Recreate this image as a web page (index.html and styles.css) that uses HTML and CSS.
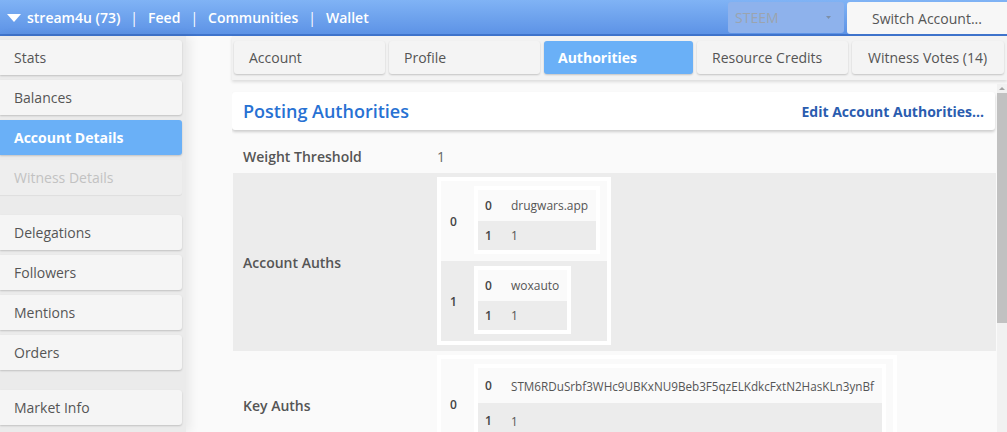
FILE: index.html
```html
<!DOCTYPE html>
<html lang="en">
<head>
  <meta charset="UTF-8">
  <title>stream4u - Account Details</title>
  <link rel="stylesheet" href="styles.css">
</head>
<body>
  <header class="topbar">
    <div class="topbar-left">
      <svg class="caret" width="14" height="8" viewBox="0 0 14 8"><path d="M0 0 L14 0 L7 8 Z" fill="#fff"/></svg>
      <a href="#">stream4u (73)</a>
      <span class="sep">|</span>
      <a href="#">Feed</a>
      <span class="sep">|</span>
      <a href="#">Communities</a>
      <span class="sep">|</span>
      <a href="#">Wallet</a>
    </div>
    <div class="topbar-right">
      <div class="chain-select">
        <span>STEEM</span>
        <svg width="5" height="3" viewBox="0 0 5 3"><path d="M0 0 L5 0 L2.5 3 Z" fill="#7d8fa8"/></svg>
      </div>
      <button class="switch-btn">Switch Account...</button>
    </div>
  </header>

  <div class="main">
    <nav class="sidebar">
      <div class="side-group">
        <a class="side-item" href="#">Stats</a>
        <a class="side-item" href="#">Balances</a>
        <a class="side-item active" href="#">Account Details</a>
        <a class="side-item disabled" href="#">Witness Details</a>
      </div>
      <div class="side-group">
        <a class="side-item" href="#">Delegations</a>
        <a class="side-item" href="#">Followers</a>
        <a class="side-item" href="#">Mentions</a>
        <a class="side-item" href="#">Orders</a>
      </div>
      <div class="side-group">
        <a class="side-item" href="#">Market Info</a>
      </div>
    </nav>

    <section class="content">
      <div class="tabs">
        <a class="tab" href="#">Account</a>
        <a class="tab" href="#">Profile</a>
        <a class="tab active" href="#">Authorities</a>
        <a class="tab" href="#">Resource Credits</a>
        <a class="tab" href="#">Witness Votes (14)</a>
      </div>

      <div class="pane-wrap">
        <div class="pane">
          <div class="panel-head">
            <h2>Posting Authorities</h2>
            <a href="#" class="edit-link">Edit Account Authorities...</a>
          </div>

          <table class="auth-table">
            <tr class="light">
              <th>Weight Threshold</th>
              <td class="plain">1</td>
            </tr>
            <tr class="dark">
              <th>Account Auths</th>
              <td>
                <table class="nest">
                  <tr class="light">
                    <th>0</th>
                    <td>
                      <table class="pair">
                        <tr class="light"><th>0</th><td>drugwars.app</td></tr>
                        <tr class="dark"><th>1</th><td>1</td></tr>
                      </table>
                    </td>
                  </tr>
                  <tr class="dark">
                    <th>1</th>
                    <td>
                      <table class="pair">
                        <tr class="light"><th>0</th><td>woxauto</td></tr>
                        <tr class="dark"><th>1</th><td>1</td></tr>
                      </table>
                    </td>
                  </tr>
                </table>
              </td>
            </tr>
            <tr class="light">
              <th>Key Auths</th>
              <td>
                <table class="nest">
                  <tr class="light">
                    <th>0</th>
                    <td>
                      <table class="pair wide">
                        <tr class="light"><th>0</th><td>STM6RDuSrbf3WHc9UBKxNU9Beb3F5qzELKdkcFxtN2HasKLn3ynBf</td></tr>
                        <tr class="dark"><th>1</th><td>1</td></tr>
                      </table>
                    </td>
                  </tr>
                </table>
              </td>
            </tr>
          </table>
        </div>
        <div class="scrollbar">
          <div class="scroll-up"></div>
          <div class="scroll-thumb"></div>
        </div>
      </div>
    </section>
  </div>
</body>
</html>
```

FILE: styles.css
```css
* {
  box-sizing: border-box;
}
body {
  margin: 0;
  background-color: #fafafa;
  color: #555;
  font-family: "Open Sans", "Liberation Sans", sans-serif;
  font-size: 14px;
  height: 432px;
  overflow: hidden;
  display: flex;
  flex-direction: column;
}
a {
  text-decoration: none;
}

/* top bar */
.topbar {
  height: 36px;
  flex: none;
  display: flex;
  justify-content: space-between;
  align-items: center;
  background: linear-gradient(#80b3f5, #5d93e6);
  border-bottom: 2px solid #3f74cc;
}
.topbar-left {
  display: flex;
  align-items: center;
  padding-left: 7px;
  color: #fff;
  font-weight: 600;
}
.topbar-left a {
  color: #fff;
}
.caret {
  margin-right: 6px;
  margin-top: 2px;
}
.sep {
  margin: 0 10px;
  font-weight: 400;
}
.topbar-right {
  display: flex;
  align-self: stretch;
  padding-top: 2px;
  gap: 3px;
}
.chain-select {
  width: 116px;
  height: 31px;
  display: flex;
  justify-content: space-between;
  align-items: center;
  padding: 0 13px 0 7px;
  background-color: #8eb2ec;
  border-radius: 3px;
  color: #9ba4af;
  font-size: 14px;
}
.switch-btn {
  width: 160px;
  height: 32px;
  border: none;
  border-radius: 3px 0 0 3px;
  background-color: #f7f7f7;
  color: #555;
  font-family: inherit;
  font-size: 14px;
  padding: 0;
}

/* layout */
.main {
  flex: 1;
  display: flex;
  min-height: 0;
}

/* sidebar */
.sidebar {
  width: 186px;
  flex: none;
  background-color: #ebebeb;
  box-shadow: 4px 0 10px rgba(0, 0, 0, 0.07);
  padding-top: 4px;
  display: flex;
  flex-direction: column;
  gap: 20px;
}
.side-group {
  display: flex;
  flex-direction: column;
  gap: 5px;
}
.side-item {
  width: 182px;
  height: 35px;
  display: flex;
  align-items: center;
  padding-left: 14px;
  background-color: #f5f5f5;
  color: #555;
  border-radius: 0 3px 3px 0;
  box-shadow: 0 1px 2px rgba(0, 0, 0, 0.18);
}
.side-item.active {
  background-color: #6ab0f7;
  color: #fff;
  font-weight: 700;
}
.side-item.disabled {
  background-color: #eeeeee;
  color: #c2c2c2;
  box-shadow: 0 1px 1px rgba(0, 0, 0, 0.06);
}

/* content */
.content {
  flex: 1;
  display: flex;
  flex-direction: column;
  padding-left: 46px;
  min-width: 0;
  min-height: 0;
}
.tabs {
  flex: none;
  display: flex;
  gap: 4px;
  padding: 5px 0 6px 2px;
  background-color: #f3f3f3;
  box-shadow: 0 2px 3px rgba(0, 0, 0, 0.12);
  margin-bottom: 4px;
}
.tab {
  width: 151px;
  height: 33px;
  display: flex;
  align-items: center;
  padding-left: 15px;
  background-color: #f4f4f4;
  color: #555;
  border-radius: 3px;
  box-shadow: 0 1px 2px rgba(0, 0, 0, 0.2);
}
.tab:nth-child(3) {
  width: 149px;
  padding-left: 14px;
}
.tab:nth-child(5) {
  width: 152px;
  padding-left: 16px;
}
.tab.active {
  background-color: #6ab0f7;
  color: #fff;
  font-weight: 700;
}

.pane-wrap {
  flex: 1;
  min-height: 0;
  display: flex;
}
.pane {
  flex: 1;
  min-width: 0;
  overflow: hidden;
  padding-top: 8px;
}
.scrollbar {
  width: 10px;
  flex: none;
  background-color: #f1f1f1;
  display: flex;
  flex-direction: column;
  align-items: center;
}
.scroll-up {
  width: 0;
  height: 0;
  margin: 3px 0 3px;
  border-left: 3px solid transparent;
  border-right: 3px solid transparent;
  border-bottom: 3px solid #a3a3a3;
}
.scroll-thumb {
  width: 10px;
  height: 230px;
  background-color: #c1c1c1;
}

.panel-head {
  height: 38px;
  margin-right: 2px;
  display: flex;
  justify-content: space-between;
  align-items: center;
  padding: 0 11px;
  background-color: #fff;
  border-radius: 3px;
  box-shadow: 0 2px 3px rgba(0, 0, 0, 0.18);
  margin-bottom: 10px;
}
.panel-head h2 {
  margin: 0;
  font-size: 18px;
  font-weight: 600;
  color: #2771d3;
}
.edit-link {
  color: #2a5caf;
  font-weight: 700;
  font-size: 14px;
}

/* authorities table */
.auth-table {
  width: calc(100% - 2px);
  margin-left: 1px;
  border-collapse: collapse;
}
.auth-table > tbody > tr > th {
  width: 194px;
  text-align: left;
  padding-left: 10px;
  font-weight: 600;
  color: #555;
}
.auth-table > tbody > tr > td {
  padding: 4px 10px 6px;
}
.auth-table > tbody > tr > td.plain {
  height: 33px;
  padding-top: 0;
  padding-bottom: 0;
  color: #666;
}
tr.light {
  background-color: #fafafa;
}
tr.dark {
  background-color: #ececec;
}

.nest {
  border-collapse: separate;
  border-spacing: 0;
  border: 4px solid #fff;
  font-size: 12px;
}
.nest > tbody > tr > th {
  width: 33px;
  text-align: left;
  padding-left: 9px;
  font-weight: 600;
  color: #444;
}
.nest > tbody > tr > td {
  padding: 5px 7px 7px 0;
}

.pair {
  border-collapse: separate;
  border-spacing: 0;
  border: 4px solid #fff;
  font-size: 12px;
}
.pair th {
  width: 32px;
  text-align: left;
  padding-left: 7px;
  font-weight: 600;
  color: #444;
}
.pair td {
  color: #555;
  padding-right: 8px;
}
.pair tr.light th,
.pair tr.light td {
  height: 31px;
}
.pair tr.dark th,
.pair tr.dark td {
  height: 29px;
}
.pair.wide td {
  font-size: 11.7px;
}
.pair.wide tr.light th,
.pair.wide tr.light td {
  height: 35px;
}
.pair.wide tr.dark th,
.pair.wide tr.dark td {
  height: 35px;
}
```
